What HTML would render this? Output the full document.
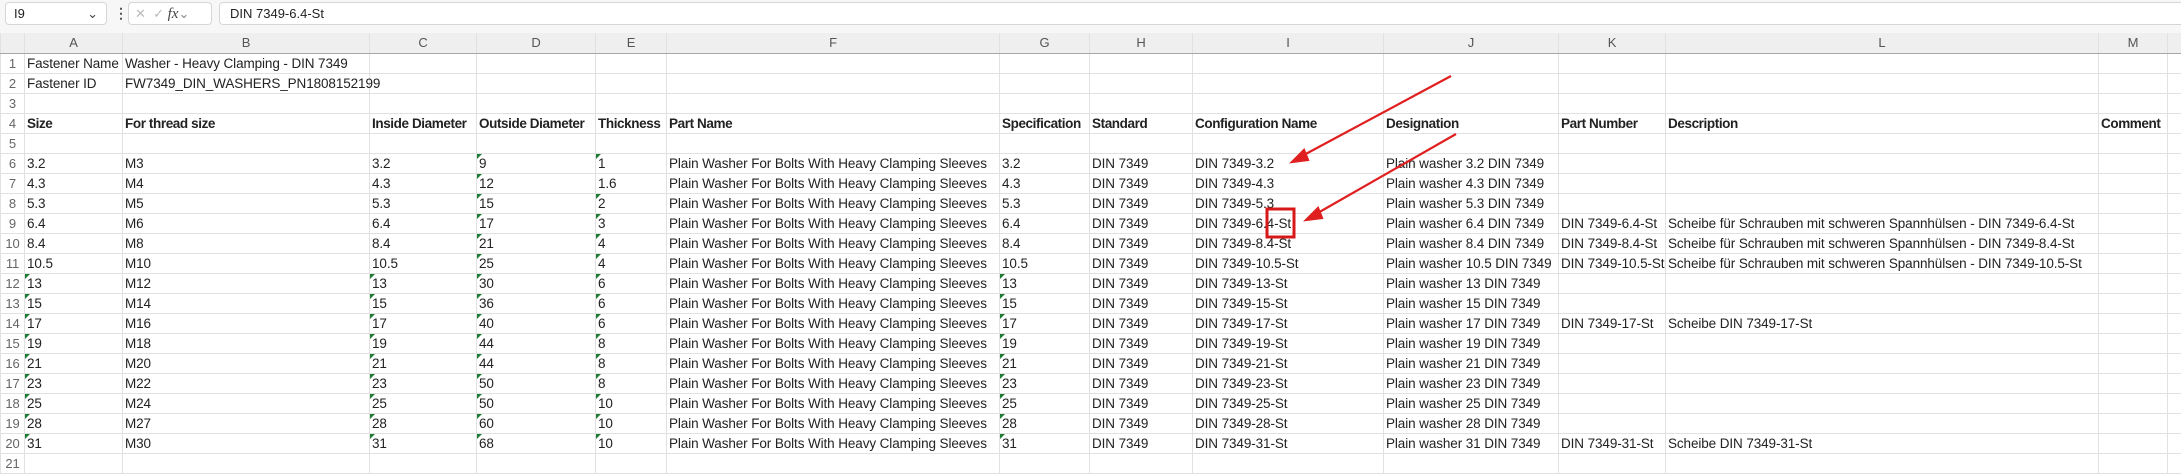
<!DOCTYPE html>
<html><head><meta charset="utf-8"><style>
*{margin:0;padding:0;box-sizing:border-box}
body{width:2181px;height:474px;overflow:hidden;background:#fff;font-family:"Liberation Sans Narrow","Liberation Sans",sans-serif;font-size:13.5px;letter-spacing:-0.1px;color:#222;position:relative}
.top{position:absolute;left:0;top:0;width:2181px;height:33px;background:#f7f7f7}
.box{position:absolute;top:2px;height:23px;background:#fff;border:1px solid #d6d6d6;border-radius:4px;font-family:"Liberation Sans",sans-serif;font-size:13px;line-height:21px;letter-spacing:0}
table{position:absolute;left:0;top:33px;border-collapse:collapse;table-layout:fixed;width:2181px}
td{height:20px;border:1px solid #e1e1e1;padding:0 2px;white-space:nowrap;overflow:hidden;line-height:19px;position:relative}
tr.v td{overflow:visible}
tr.h td{height:20px;background:#efefef;text-align:center;color:#555;font-family:"Liberation Sans",sans-serif;font-size:13px;border-bottom:1px solid #a8a8a8;border-top:none}
td.n{color:#666;text-align:center;font-size:13px;background:#fff;padding:0}
tr.b td{font-weight:bold;letter-spacing:-0.4px}
.g::before{content:"";position:absolute;left:0;top:0;border-top:5px solid #1e7b34;border-right:5px solid transparent}
</style></head><body>
<div class="top"></div>
<div class="box" style="left:5px;width:102px;padding-left:8px">I9<span style="position:absolute;right:8px;top:0;color:#444">&#8964;</span></div>
<div style="position:absolute;left:114px;top:5px;font-size:14px;color:#555;font-weight:bold">&#8942;</div>
<div class="box" style="left:128px;width:84px;color:#bbb;padding-left:6px">✕ &nbsp;✓ <span style="color:#444;font-family:'Liberation Serif',serif;font-style:italic;font-size:15px">fx</span><span style="color:#888">&#8964;</span></div>
<div class="box" style="left:219px;width:1970px;padding-left:10px;color:#222">DIN 7349-6.4-St</div>
<table>
<colgroup><col style="width:24px"><col style="width:98px"><col style="width:247px"><col style="width:107px"><col style="width:119px"><col style="width:71px"><col style="width:333px"><col style="width:90px"><col style="width:103px"><col style="width:191px"><col style="width:175px"><col style="width:107px"><col style="width:433px"><col style="width:69px"><col style="width:14px"></colgroup>
<tr class="h"><td style="background:#efefef"></td><td>A</td><td>B</td><td>C</td><td>D</td><td>E</td><td>F</td><td>G</td><td>H</td><td>I</td><td>J</td><td>K</td><td>L</td><td>M</td><td></td></tr>
<tr class="v"><td class="n">1</td><td>Fastener Name</td><td>Washer - Heavy Clamping - DIN 7349</td><td></td><td></td><td></td><td></td><td></td><td></td><td></td><td></td><td></td><td></td><td></td><td></td></tr>
<tr class="v"><td class="n">2</td><td>Fastener ID</td><td>FW7349_DIN_WASHERS_PN1808152199</td><td></td><td></td><td></td><td></td><td></td><td></td><td></td><td></td><td></td><td></td><td></td><td></td></tr>
<tr><td class="n">3</td><td></td><td></td><td></td><td></td><td></td><td></td><td></td><td></td><td></td><td></td><td></td><td></td><td></td><td></td></tr>
<tr class="b"><td class="n" style="font-weight:normal;letter-spacing:0">4</td><td>Size</td><td>For thread size</td><td>Inside Diameter</td><td>Outside Diameter</td><td>Thickness</td><td>Part Name</td><td>Specification</td><td>Standard</td><td>Configuration Name</td><td>Designation</td><td>Part Number</td><td>Description</td><td>Comment</td><td></td></tr>
<tr><td class="n">5</td><td></td><td></td><td></td><td></td><td></td><td></td><td></td><td></td><td></td><td></td><td></td><td></td><td></td><td></td></tr>
<tr><td class="n">6</td><td>3.2</td><td>M3</td><td>3.2</td><td class="g">9</td><td class="g">1</td><td>Plain Washer For Bolts With Heavy Clamping Sleeves</td><td>3.2</td><td>DIN 7349</td><td>DIN 7349-3.2</td><td>Plain washer 3.2 DIN 7349</td><td></td><td></td><td></td><td></td></tr>
<tr><td class="n">7</td><td>4.3</td><td>M4</td><td>4.3</td><td class="g">12</td><td>1.6</td><td>Plain Washer For Bolts With Heavy Clamping Sleeves</td><td>4.3</td><td>DIN 7349</td><td>DIN 7349-4.3</td><td>Plain washer 4.3 DIN 7349</td><td></td><td></td><td></td><td></td></tr>
<tr><td class="n">8</td><td>5.3</td><td>M5</td><td>5.3</td><td class="g">15</td><td class="g">2</td><td>Plain Washer For Bolts With Heavy Clamping Sleeves</td><td>5.3</td><td>DIN 7349</td><td>DIN 7349-5.3</td><td>Plain washer 5.3 DIN 7349</td><td></td><td></td><td></td><td></td></tr>
<tr><td class="n">9</td><td>6.4</td><td>M6</td><td>6.4</td><td class="g">17</td><td class="g">3</td><td>Plain Washer For Bolts With Heavy Clamping Sleeves</td><td>6.4</td><td>DIN 7349</td><td>DIN 7349-6.4-St</td><td>Plain washer 6.4 DIN 7349</td><td>DIN 7349-6.4-St</td><td>Scheibe für Schrauben mit schweren Spannhülsen - DIN 7349-6.4-St</td><td></td><td></td></tr>
<tr><td class="n">10</td><td>8.4</td><td>M8</td><td>8.4</td><td class="g">21</td><td class="g">4</td><td>Plain Washer For Bolts With Heavy Clamping Sleeves</td><td>8.4</td><td>DIN 7349</td><td>DIN 7349-8.4-St</td><td>Plain washer 8.4 DIN 7349</td><td>DIN 7349-8.4-St</td><td>Scheibe für Schrauben mit schweren Spannhülsen - DIN 7349-8.4-St</td><td></td><td></td></tr>
<tr><td class="n">11</td><td>10.5</td><td>M10</td><td>10.5</td><td class="g">25</td><td class="g">4</td><td>Plain Washer For Bolts With Heavy Clamping Sleeves</td><td>10.5</td><td>DIN 7349</td><td>DIN 7349-10.5-St</td><td>Plain washer 10.5 DIN 7349</td><td>DIN 7349-10.5-St</td><td>Scheibe für Schrauben mit schweren Spannhülsen - DIN 7349-10.5-St</td><td></td><td></td></tr>
<tr><td class="n">12</td><td class="g">13</td><td>M12</td><td class="g">13</td><td class="g">30</td><td class="g">6</td><td>Plain Washer For Bolts With Heavy Clamping Sleeves</td><td class="g">13</td><td>DIN 7349</td><td>DIN 7349-13-St</td><td>Plain washer 13 DIN 7349</td><td></td><td></td><td></td><td></td></tr>
<tr><td class="n">13</td><td class="g">15</td><td>M14</td><td class="g">15</td><td class="g">36</td><td class="g">6</td><td>Plain Washer For Bolts With Heavy Clamping Sleeves</td><td class="g">15</td><td>DIN 7349</td><td>DIN 7349-15-St</td><td>Plain washer 15 DIN 7349</td><td></td><td></td><td></td><td></td></tr>
<tr><td class="n">14</td><td class="g">17</td><td>M16</td><td class="g">17</td><td class="g">40</td><td class="g">6</td><td>Plain Washer For Bolts With Heavy Clamping Sleeves</td><td class="g">17</td><td>DIN 7349</td><td>DIN 7349-17-St</td><td>Plain washer 17 DIN 7349</td><td>DIN 7349-17-St</td><td>Scheibe DIN 7349-17-St</td><td></td><td></td></tr>
<tr><td class="n">15</td><td class="g">19</td><td>M18</td><td class="g">19</td><td class="g">44</td><td class="g">8</td><td>Plain Washer For Bolts With Heavy Clamping Sleeves</td><td class="g">19</td><td>DIN 7349</td><td>DIN 7349-19-St</td><td>Plain washer 19 DIN 7349</td><td></td><td></td><td></td><td></td></tr>
<tr><td class="n">16</td><td class="g">21</td><td>M20</td><td class="g">21</td><td class="g">44</td><td class="g">8</td><td>Plain Washer For Bolts With Heavy Clamping Sleeves</td><td class="g">21</td><td>DIN 7349</td><td>DIN 7349-21-St</td><td>Plain washer 21 DIN 7349</td><td></td><td></td><td></td><td></td></tr>
<tr><td class="n">17</td><td class="g">23</td><td>M22</td><td class="g">23</td><td class="g">50</td><td class="g">8</td><td>Plain Washer For Bolts With Heavy Clamping Sleeves</td><td class="g">23</td><td>DIN 7349</td><td>DIN 7349-23-St</td><td>Plain washer 23 DIN 7349</td><td></td><td></td><td></td><td></td></tr>
<tr><td class="n">18</td><td class="g">25</td><td>M24</td><td class="g">25</td><td class="g">50</td><td class="g">10</td><td>Plain Washer For Bolts With Heavy Clamping Sleeves</td><td class="g">25</td><td>DIN 7349</td><td>DIN 7349-25-St</td><td>Plain washer 25 DIN 7349</td><td></td><td></td><td></td><td></td></tr>
<tr><td class="n">19</td><td class="g">28</td><td>M27</td><td class="g">28</td><td class="g">60</td><td class="g">10</td><td>Plain Washer For Bolts With Heavy Clamping Sleeves</td><td class="g">28</td><td>DIN 7349</td><td>DIN 7349-28-St</td><td>Plain washer 28 DIN 7349</td><td></td><td></td><td></td><td></td></tr>
<tr><td class="n">20</td><td class="g">31</td><td>M30</td><td class="g">31</td><td class="g">68</td><td class="g">10</td><td>Plain Washer For Bolts With Heavy Clamping Sleeves</td><td class="g">31</td><td>DIN 7349</td><td>DIN 7349-31-St</td><td>Plain washer 31 DIN 7349</td><td>DIN 7349-31-St</td><td>Scheibe DIN 7349-31-St</td><td></td><td></td></tr>
<tr><td class="n">21</td><td></td><td></td><td></td><td></td><td></td><td></td><td></td><td></td><td></td><td></td><td></td><td></td><td></td><td></td></tr>
</table>
<svg width="2181" height="474" style="position:absolute;left:0;top:0">
<g stroke="#e02020" stroke-width="2.2" fill="#e02020">
<line x1="1451" y1="76" x2="1302" y2="156"/>
<polygon points="1292,162 1304,150 1308,160" />
<line x1="1456" y1="134" x2="1316" y2="214"/>
<polygon points="1306,220 1318,208 1322,218"/>
</g>
<rect x="1267" y="209" width="27" height="28" fill="none" stroke="#d81818" stroke-width="3"/>
</svg>
</body></html>
